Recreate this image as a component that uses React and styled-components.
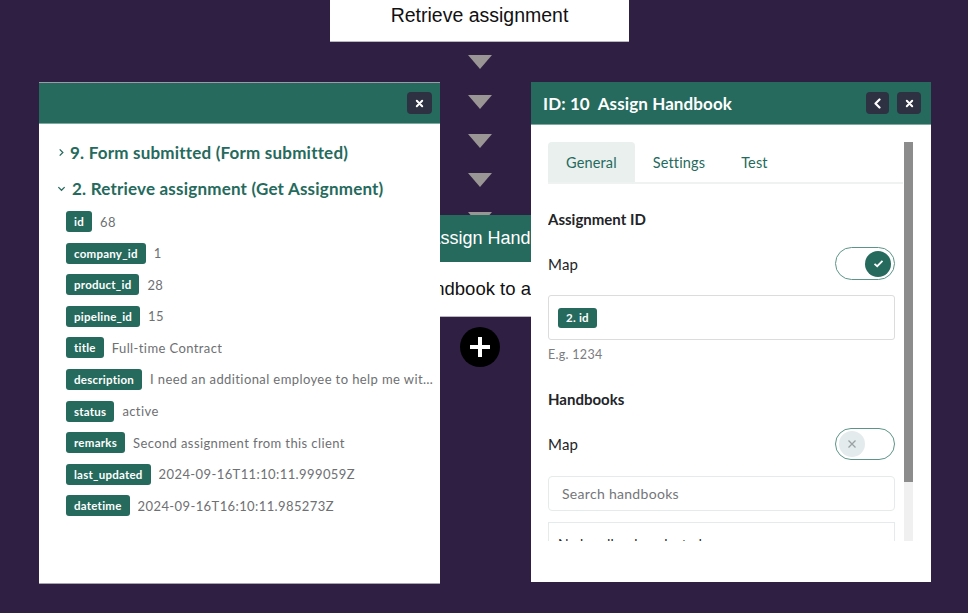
import React from 'react';
import styled, { createGlobalStyle } from 'styled-components';

const COLORS = {
  canvas: '#2e1f43',
  green: '#256a5c',
  greenSoft: '#5c9587',
  dark: '#2d3142',
  text: '#222428',
  muted: '#6e7073',
  arrow: '#9b9696',
};

const GlobalStyle = createGlobalStyle`
  html, body {
    margin: 0;
    padding: 0;
    background: ${COLORS.canvas};
  }
  * { box-sizing: border-box; }
`;

const Canvas = styled.div`
  position: relative;
  width: 968px;
  height: 613px;
  overflow: hidden;
  background: ${COLORS.canvas};
  font-family: Lato, "Liberation Sans", sans-serif;
`;

/* diagram nodes: their place on the canvas is the content */
const Node = styled.div`
  position: absolute;
  left: ${p => p.$x}px;
  top: ${p => p.$y}px;
  width: ${p => p.$w}px;
  background: white;
  border-bottom: 1px solid #b9b6bf;
  font-family: "Liberation Sans", Arial, sans-serif;
  font-size: 18px;
  color: #111;
  text-align: center;
`;

const NodeTitle = styled.div`
  height: 41px;
  padding-top: 4px;
  font-size: 19.5px;
  white-space: nowrap;
`;

const NodeHeader = styled.div`
  height: 47px;
  display: flex;
  align-items: center;
  justify-content: center;
  background: ${COLORS.green};
  color: white;
  white-space: nowrap;
`;

const NodeBody = styled.div`
  height: 54px;
  padding-left: 4px;
  display: flex;
  align-items: center;
  font-size: 18.5px;
  white-space: nowrap;
`;

const Arrow = styled.div`
  position: absolute;
  left: 468px;
  top: ${p => p.$y}px;
  width: 0;
  height: 0;
  border-left: 12.5px solid transparent;
  border-right: 12.5px solid transparent;
  border-top: 14px solid ${COLORS.arrow};
`;

const AddButton = styled.div`
  position: absolute;
  left: 460px;
  top: 327px;
  width: 40px;
  height: 40px;
  border-radius: 50%;
  background: #000;
  display: flex;
  align-items: center;
  justify-content: center;
`;

/* floating panels */
const Panel = styled.div`
  position: absolute;
  left: ${p => p.$x}px;
  top: ${p => p.$y}px;
  width: ${p => p.$w}px;
  height: 500px;
  background: white;
  display: flex;
  flex-direction: column;
  box-shadow: ${p => p.$ghost ? '0 -1px 0 #9f9aab, 0 1px 0 #a7a3b0' : 'none'};
`;

const PanelHeader = styled.div`
  height: ${p => p.$h}px;
  flex: none;
  display: flex;
  align-items: center;
  gap: 8px;
  padding: 0 ${p => p.$pr}px 0 12px;
  background: ${COLORS.green};
  border-bottom: 1px solid #7ea9a0;
`;

const PanelTitle = styled.div`
  flex: 1;
  color: white;
  font-size: 17px;
  font-weight: 700;
  letter-spacing: 0.1px;
  white-space: nowrap;
`;

const IconButton = styled.div`
  width: ${p => p.$w}px;
  height: 22px;
  border-radius: 4px;
  background: ${COLORS.dark};
  display: flex;
  align-items: center;
  justify-content: center;
`;

const LeftBody = styled.div`
  padding: 10px 4px 0 18px;
`;

const StepHeading = styled.div`
  height: 36px;
  display: flex;
  align-items: center;
  gap: ${p => p.$gap}px;
  color: ${COLORS.green};
  font-size: 17px;
  font-weight: 700;
  letter-spacing: 0.2px;
  white-space: nowrap;
`;

const FieldList = styled.div`
  margin-top: 5px;
  padding-left: 9px;
  display: flex;
  flex-direction: column;
  gap: 10.6px;
`;

const FieldRow = styled.div`
  display: flex;
  align-items: center;
  gap: 8px;
  min-width: 0;
  height: 21px;
`;

const Chip = styled.span`
  flex: none;
  height: ${p => p.$h || 21}px;
  padding: 0 8px;
  display: inline-flex;
  align-items: center;
  border-radius: 3px;
  background: ${COLORS.green};
  color: white;
  font-size: 11.5px;
  font-weight: 700;
  letter-spacing: 0.25px;
`;

const Value = styled.span`
  min-width: 0;
  overflow: hidden;
  text-overflow: ellipsis;
  white-space: nowrap;
  color: ${COLORS.muted};
  font-size: 13px;
  letter-spacing: 0.4px;
`;

const RightBody = styled.div`
  padding: 17px 18px 0 17px;
`;

const ScrollFrame = styled.div`
  height: 399px;
  display: flex;
`;

const ScrollContent = styled.div`
  flex: 1;
  min-width: 0;
  overflow: hidden;
`;

const ScrollTrack = styled.div`
  flex: none;
  width: 9px;
  margin-left: 1px;
  background: #f0f0f0;
`;

const ScrollThumb = styled.div`
  height: 340px;
  background: #8c8c8c;
`;

const Tabs = styled.div`
  display: flex;
  border-bottom: 2px solid #eef3f2;
`;

const Tab = styled.div`
  height: 40px;
  padding: 0 18px;
  display: flex;
  align-items: center;
  border-radius: 4px 4px 0 0;
  background: ${p => p.$active ? '#e9f0ee' : 'transparent'};
  color: ${COLORS.green};
  font-size: 14.5px;
  letter-spacing: 0.15px;
`;

const Form = styled.div`
  padding-right: 8px;
  display: flex;
  flex-direction: column;
`;

const SectionLabel = styled.div`
  margin-top: ${p => p.$mt}px;
  height: 20px;
  line-height: 20px;
  color: ${COLORS.text};
  font-size: 15px;
  font-weight: 700;
`;

const MapRow = styled.div`
  margin-top: ${p => p.$mt}px;
  display: flex;
  align-items: center;
  justify-content: space-between;
  color: ${COLORS.text};
  font-size: 15px;
  letter-spacing: 0.2px;
`;

const Toggle = styled.div`
  width: 60px;
  height: ${p => p.$h}px;
  padding: 0 3px;
  border: 1.5px solid ${COLORS.greenSoft};
  border-radius: 17px;
  background: white;
  display: flex;
  align-items: center;
  justify-content: ${p => p.$on ? 'flex-end' : 'flex-start'};
`;

const Knob = styled.div`
  width: 26px;
  height: 26px;
  border-radius: 50%;
  background: ${p => p.$on ? COLORS.green : '#e4ebec'};
  display: flex;
  align-items: center;
  justify-content: center;
`;

const MapInput = styled.div`
  margin-top: 15px;
  height: 45px;
  padding: 0 9px;
  display: flex;
  align-items: center;
  border: 1px solid #dcdcdc;
  border-radius: 3px;
`;

const Helper = styled.div`
  margin-top: 7px;
  height: 16px;
  line-height: 16px;
  color: #7a7c7f;
  font-size: 12.5px;
  letter-spacing: 0.3px;
`;

const Search = styled.div`
  margin-top: 16px;
  height: 35px;
  padding: 0 13px;
  display: flex;
  align-items: center;
  border: 1px solid #e3ecea;
  border-radius: 4px;
  color: #74767a;
  font-size: 14px;
  letter-spacing: 0.3px;
`;

const Selected = styled.div`
  margin-top: 11px;
  height: 45px;
  padding: 12px 9px 0;
  border: 1px solid #e3ecea;
  color: ${COLORS.text};
  font-size: 14px;
`;

const CloseIcon = () => (
  <svg width="9" height="9" viewBox="0 0 10 10">
    <path d="M2 2 L8 8 M8 2 L2 8" stroke="white" strokeWidth="2.2" strokeLinecap="round" />
  </svg>
);

const BackIcon = () => (
  <svg width="9" height="11" viewBox="0 0 9 11">
    <path d="M6.5 1.5 L2.5 5.5 L6.5 9.5" stroke="white" strokeWidth="2.2" fill="none" strokeLinecap="round" strokeLinejoin="round" />
  </svg>
);

const Chevron = ({ open }) => (
  <svg width="9" height="9" viewBox="0 0 10 10">
    <path d={open ? 'M1.5 3.5 L5 7 L8.5 3.5' : 'M3 1.5 L6.5 5 L3 8.5'} stroke={COLORS.green} strokeWidth="1.4" fill="none" />
  </svg>
);

const fields = [
  ['id', '68'],
  ['company_id', '1'],
  ['product_id', '28'],
  ['pipeline_id', '15'],
  ['title', 'Full-time Contract'],
  ['description', 'I need an additional employee to help me with the onboarding of new clients'],
  ['status', 'active'],
  ['remarks', 'Second assignment from this client'],
  ['last_updated', '2024-09-16T11:10:11.999059Z'],
  ['datetime', '2024-09-16T16:10:11.985273Z'],
];

const arrows = [55, 95, 134, 173, 212];

const App = () => {
  return (
    <Canvas>
      <GlobalStyle />

      <Node $x={330} $y={0} $w={299}>
        <NodeTitle>Retrieve assignment</NodeTitle>
      </Node>

      {arrows.map(y => <Arrow key={y} $y={y} />)}

      <Node $x={349} $y={215} $w={300}>
        <NodeHeader>Assign Handbook</NodeHeader>
        <NodeBody>Assign handbook to assignment</NodeBody>
      </Node>

      <AddButton>
        <svg width="24" height="24" viewBox="0 0 24 24">
          <path d="M12 2 V22 M2 12 H22" stroke="white" strokeWidth="4" />
        </svg>
      </AddButton>

      <Panel $x={39} $y={83} $w={401} $ghost>
        <PanelHeader $h={41} $pr={8}>
          <PanelTitle />
          <IconButton $w={25}><CloseIcon /></IconButton>
        </PanelHeader>
        <LeftBody>
          <StepHeading $gap={4}><Chevron /> 9. Form submitted (Form submitted)</StepHeading>
          <StepHeading $gap={6}><Chevron open /> 2. Retrieve assignment (Get Assignment)</StepHeading>
          <FieldList>
            {fields.map(([key, value]) => (
              <FieldRow key={key}>
                <Chip>{key}</Chip>
                <Value>{value}</Value>
              </FieldRow>
            ))}
          </FieldList>
        </LeftBody>
      </Panel>

      <Panel $x={531} $y={82} $w={400}>
        <PanelHeader $h={43} $pr={10}>
          <PanelTitle>ID: 10&nbsp; Assign Handbook</PanelTitle>
          <IconButton $w={23}><BackIcon /></IconButton>
          <IconButton $w={24}><CloseIcon /></IconButton>
        </PanelHeader>
        <RightBody>
          <ScrollFrame>
            <ScrollContent>
              <Tabs>
                <Tab $active>General</Tab>
                <Tab>Settings</Tab>
                <Tab>Test</Tab>
              </Tabs>
              <Form>
                <SectionLabel $mt={25}>Assignment ID</SectionLabel>
                <MapRow $mt={18}>
                  Map
                  <Toggle $on $h={33}>
                    <Knob $on>
                      <svg width="11" height="9" viewBox="0 0 11 9">
                        <path d="M1.5 4.8 L4.2 7.2 L9.5 1.8" stroke="white" strokeWidth="1.8" fill="none" />
                      </svg>
                    </Knob>
                  </Toggle>
                </MapRow>
                <MapInput>
                  <Chip $h={20}>2. id</Chip>
                </MapInput>
                <Helper>E.g. 1234</Helper>
                <SectionLabel $mt={26}>Handbooks</SectionLabel>
                <MapRow $mt={19}>
                  Map
                  <Toggle $h={32}>
                    <Knob>
                      <svg width="10" height="10" viewBox="0 0 10 10">
                        <path d="M1.5 1.5 L8.5 8.5 M8.5 1.5 L1.5 8.5" stroke="#9aa0a3" strokeWidth="1.3" />
                      </svg>
                    </Knob>
                  </Toggle>
                </MapRow>
                <Search>Search handbooks</Search>
                <Selected>No handbooks selected</Selected>
              </Form>
            </ScrollContent>
            <ScrollTrack>
              <ScrollThumb />
            </ScrollTrack>
          </ScrollFrame>
        </RightBody>
      </Panel>
    </Canvas>
  );
};

export default App;
